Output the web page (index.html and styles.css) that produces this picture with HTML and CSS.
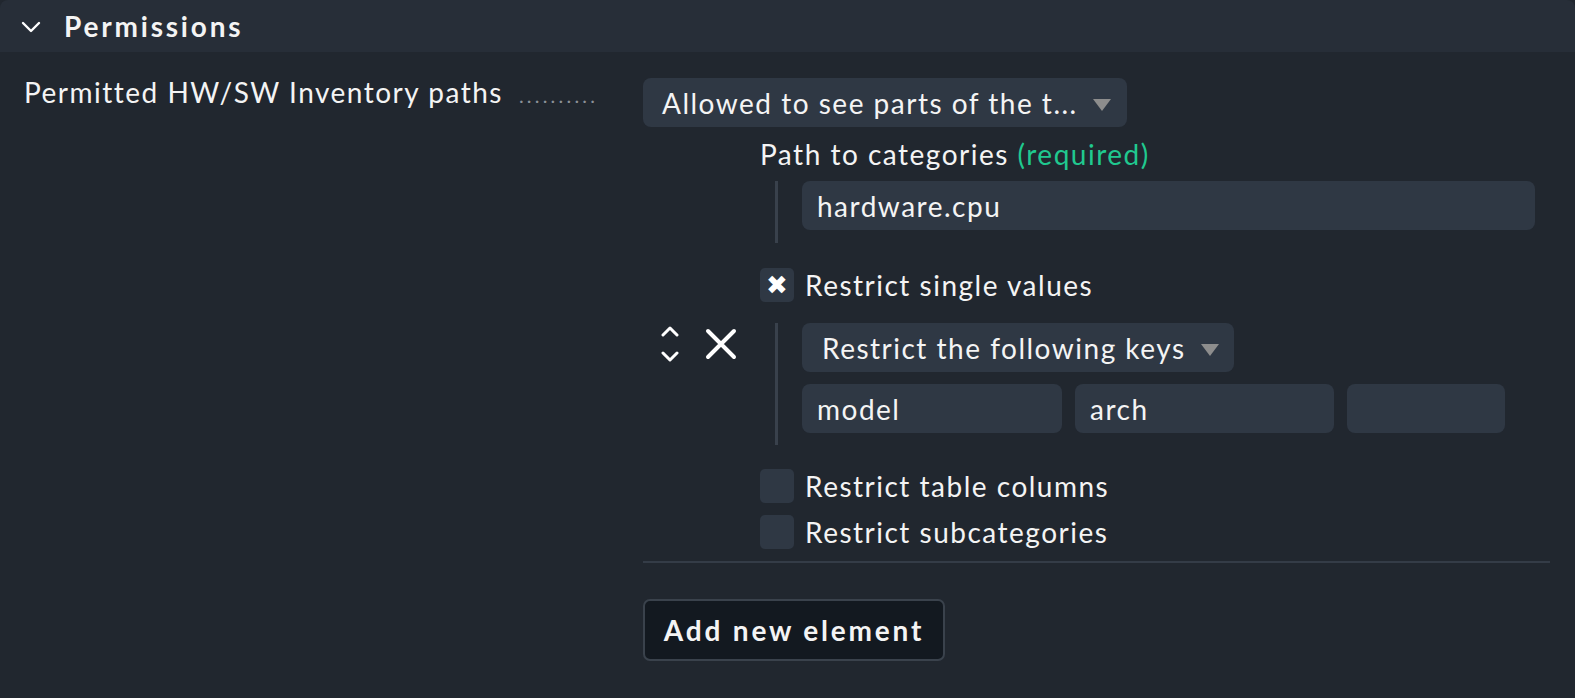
FILE: index.html
```html
<!DOCTYPE html>
<html>
<head>
<meta charset="utf-8">
<link rel="stylesheet" href="styles.css">
</head>
<body>
<div class="page">
  <div class="header">
    <svg class="hdr-chev" width="20" height="12" viewBox="0 0 20 12"><path d="M2 2 L10 10 L18 2" fill="none" stroke="#fff" stroke-width="2.4" stroke-linecap="round" stroke-linejoin="round"/></svg>
    <span class="hdr-title">Permissions</span>
  </div>
  <div class="row">
    <div class="label">Permitted HW/SW Inventory paths<span class="dots">..........</span></div>
    <div class="content">
      <div class="select main-select">
        <span>Allowed to see parts of the t...</span>
        <span class="tri"></span>
      </div>
      <div class="item">
        <div class="controls">
          <div class="updown">
            <svg width="18" height="12" viewBox="0 0 18 12"><path d="M2 10 L9 3 L16 10" fill="none" stroke="#fff" stroke-width="3" stroke-linecap="round" stroke-linejoin="round"/></svg>
            <svg width="18" height="12" viewBox="0 0 18 12"><path d="M2 2 L9 9 L16 2" fill="none" stroke="#fff" stroke-width="3" stroke-linecap="round" stroke-linejoin="round"/></svg>
          </div>
          <svg class="del" width="32" height="32" viewBox="0 0 32 32"><path d="M3 3 L29 29 M29 3 L3 29" fill="none" stroke="#fff" stroke-width="4" stroke-linecap="round"/></svg>
        </div>
        <div class="body">
          <div class="title">Path to categories <span class="req">(required)</span></div>
          <div class="block block1">
            <div class="input wide">hardware.cpu</div>
          </div>
          <div class="check first"><span class="box checked">✖</span>Restrict single values</div>
          <div class="block block2">
            <div class="select keys">
              <span>Restrict the following keys</span>
              <span class="tri"></span>
            </div>
            <div class="inputs">
              <div class="input w1">model</div>
              <div class="input w2">arch</div>
              <div class="input w3"></div>
            </div>
          </div>
          <div class="check second"><span class="box"></span>Restrict table columns</div>
          <div class="check third"><span class="box"></span>Restrict subcategories</div>
        </div>
      </div>
      <div class="sep"></div>
      <button class="add">Add new element</button>
    </div>
  </div>
</div>
</body>
</html>
```
FILE: styles.css
```css
* { box-sizing: border-box; }
html, body { margin: 0; padding: 0; }
body {
  background: #21272f;
  color: #f4f4f4;
  font-family: Lato, "Noto Sans", sans-serif;
  font-size: 28px;
  letter-spacing: 1.5px;
  width: 1575px;
  height: 698px;
  overflow: hidden;
}
.page { display: flex; flex-direction: column; }
.header {
  height: 52px;
  background: #272e38;
  border-radius: 8px 8px 0 0;
  display: flex;
  align-items: center;
  padding-left: 21px;
}
.hdr-chev { margin-right: 23px; margin-top: 2px; }
.hdr-title { font-weight: 700; letter-spacing: 2.8px; font-size: 28px; line-height: 32px; }
.row { display: flex; padding-top: 26px; }
.label {
  width: 643px;
  padding-left: 24px;
  line-height: 28px;
  white-space: nowrap;
}
.dots { color: #8c9198; letter-spacing: 3.2px; font-size: 20px; margin-left: 16px; }
.content { display: flex; flex-direction: column; width: 907px; }
.select {
  background: #2f3844;
  border-radius: 8px;
  height: 49px;
  display: flex;
  align-items: center;
  white-space: nowrap;
}
.main-select { width: 484px; padding-left: 19px; }
.tri {
  width: 0; height: 0;
  border-left: 9px solid transparent;
  border-right: 9px solid transparent;
  border-top: 12px solid #8d8d8d;
  margin-left: 15px;
  margin-top: 4px;
}
.item { display: flex; align-items: center; margin-top: 12px; }
.controls { width: 117px; display: flex; align-items: center; padding-left: 18px; }
.updown { display: flex; flex-direction: column; gap: 14px; width: 20px; }
.del { margin-left: 24px; }
.body { display: flex; flex-direction: column; }
.title { line-height: 30px; }
.req { color: #20c98f; }
.block { margin-left: 15px; border-left: 3px solid #39414c; padding-left: 24px; }
.block1 { margin-top: 12px; padding-bottom: 13px; }
.input {
  background: #2f3844;
  border-radius: 8px;
  height: 49px;
  display: flex;
  align-items: center;
  padding-left: 15px;
}
.wide { width: 733px; }
.check { display: flex; align-items: center; height: 34px; line-height: 30px; }
.check.first { margin-top: 25px; margin-bottom: 21px; }
.check.second { margin-top: 24px; }
.check.third { margin-top: 12px; }
.box {
  width: 34px; height: 34px;
  background: #2f3844;
  border-radius: 5px;
  margin-right: 11px;
  display: flex; align-items: center; justify-content: center;
  color: #fff; font-size: 26px;
  letter-spacing: 0;
  font-family: "DejaVu Sans", sans-serif;
}
.block2 { padding-bottom: 12px; }
.keys { width: 432px; padding-left: 20px; }
.inputs { display: flex; gap: 13px; margin-top: 12px; }
.w1 { width: 260px; }
.w2 { width: 259px; }
.w3 { width: 158px; }
.sep { height: 2px; background: #343c47; margin-top: 12px; }
.add {
  align-self: flex-start;
  margin-top: 36px;
  width: 302px;
  height: 62px;
  background: #131920;
  border: 2px solid #3a424c;
  border-radius: 7px;
  color: #f4f4f4;
  font-family: Lato, sans-serif;
  font-weight: 700;
  font-size: 28px;
  letter-spacing: 2.8px;
  padding: 0;
}
```
